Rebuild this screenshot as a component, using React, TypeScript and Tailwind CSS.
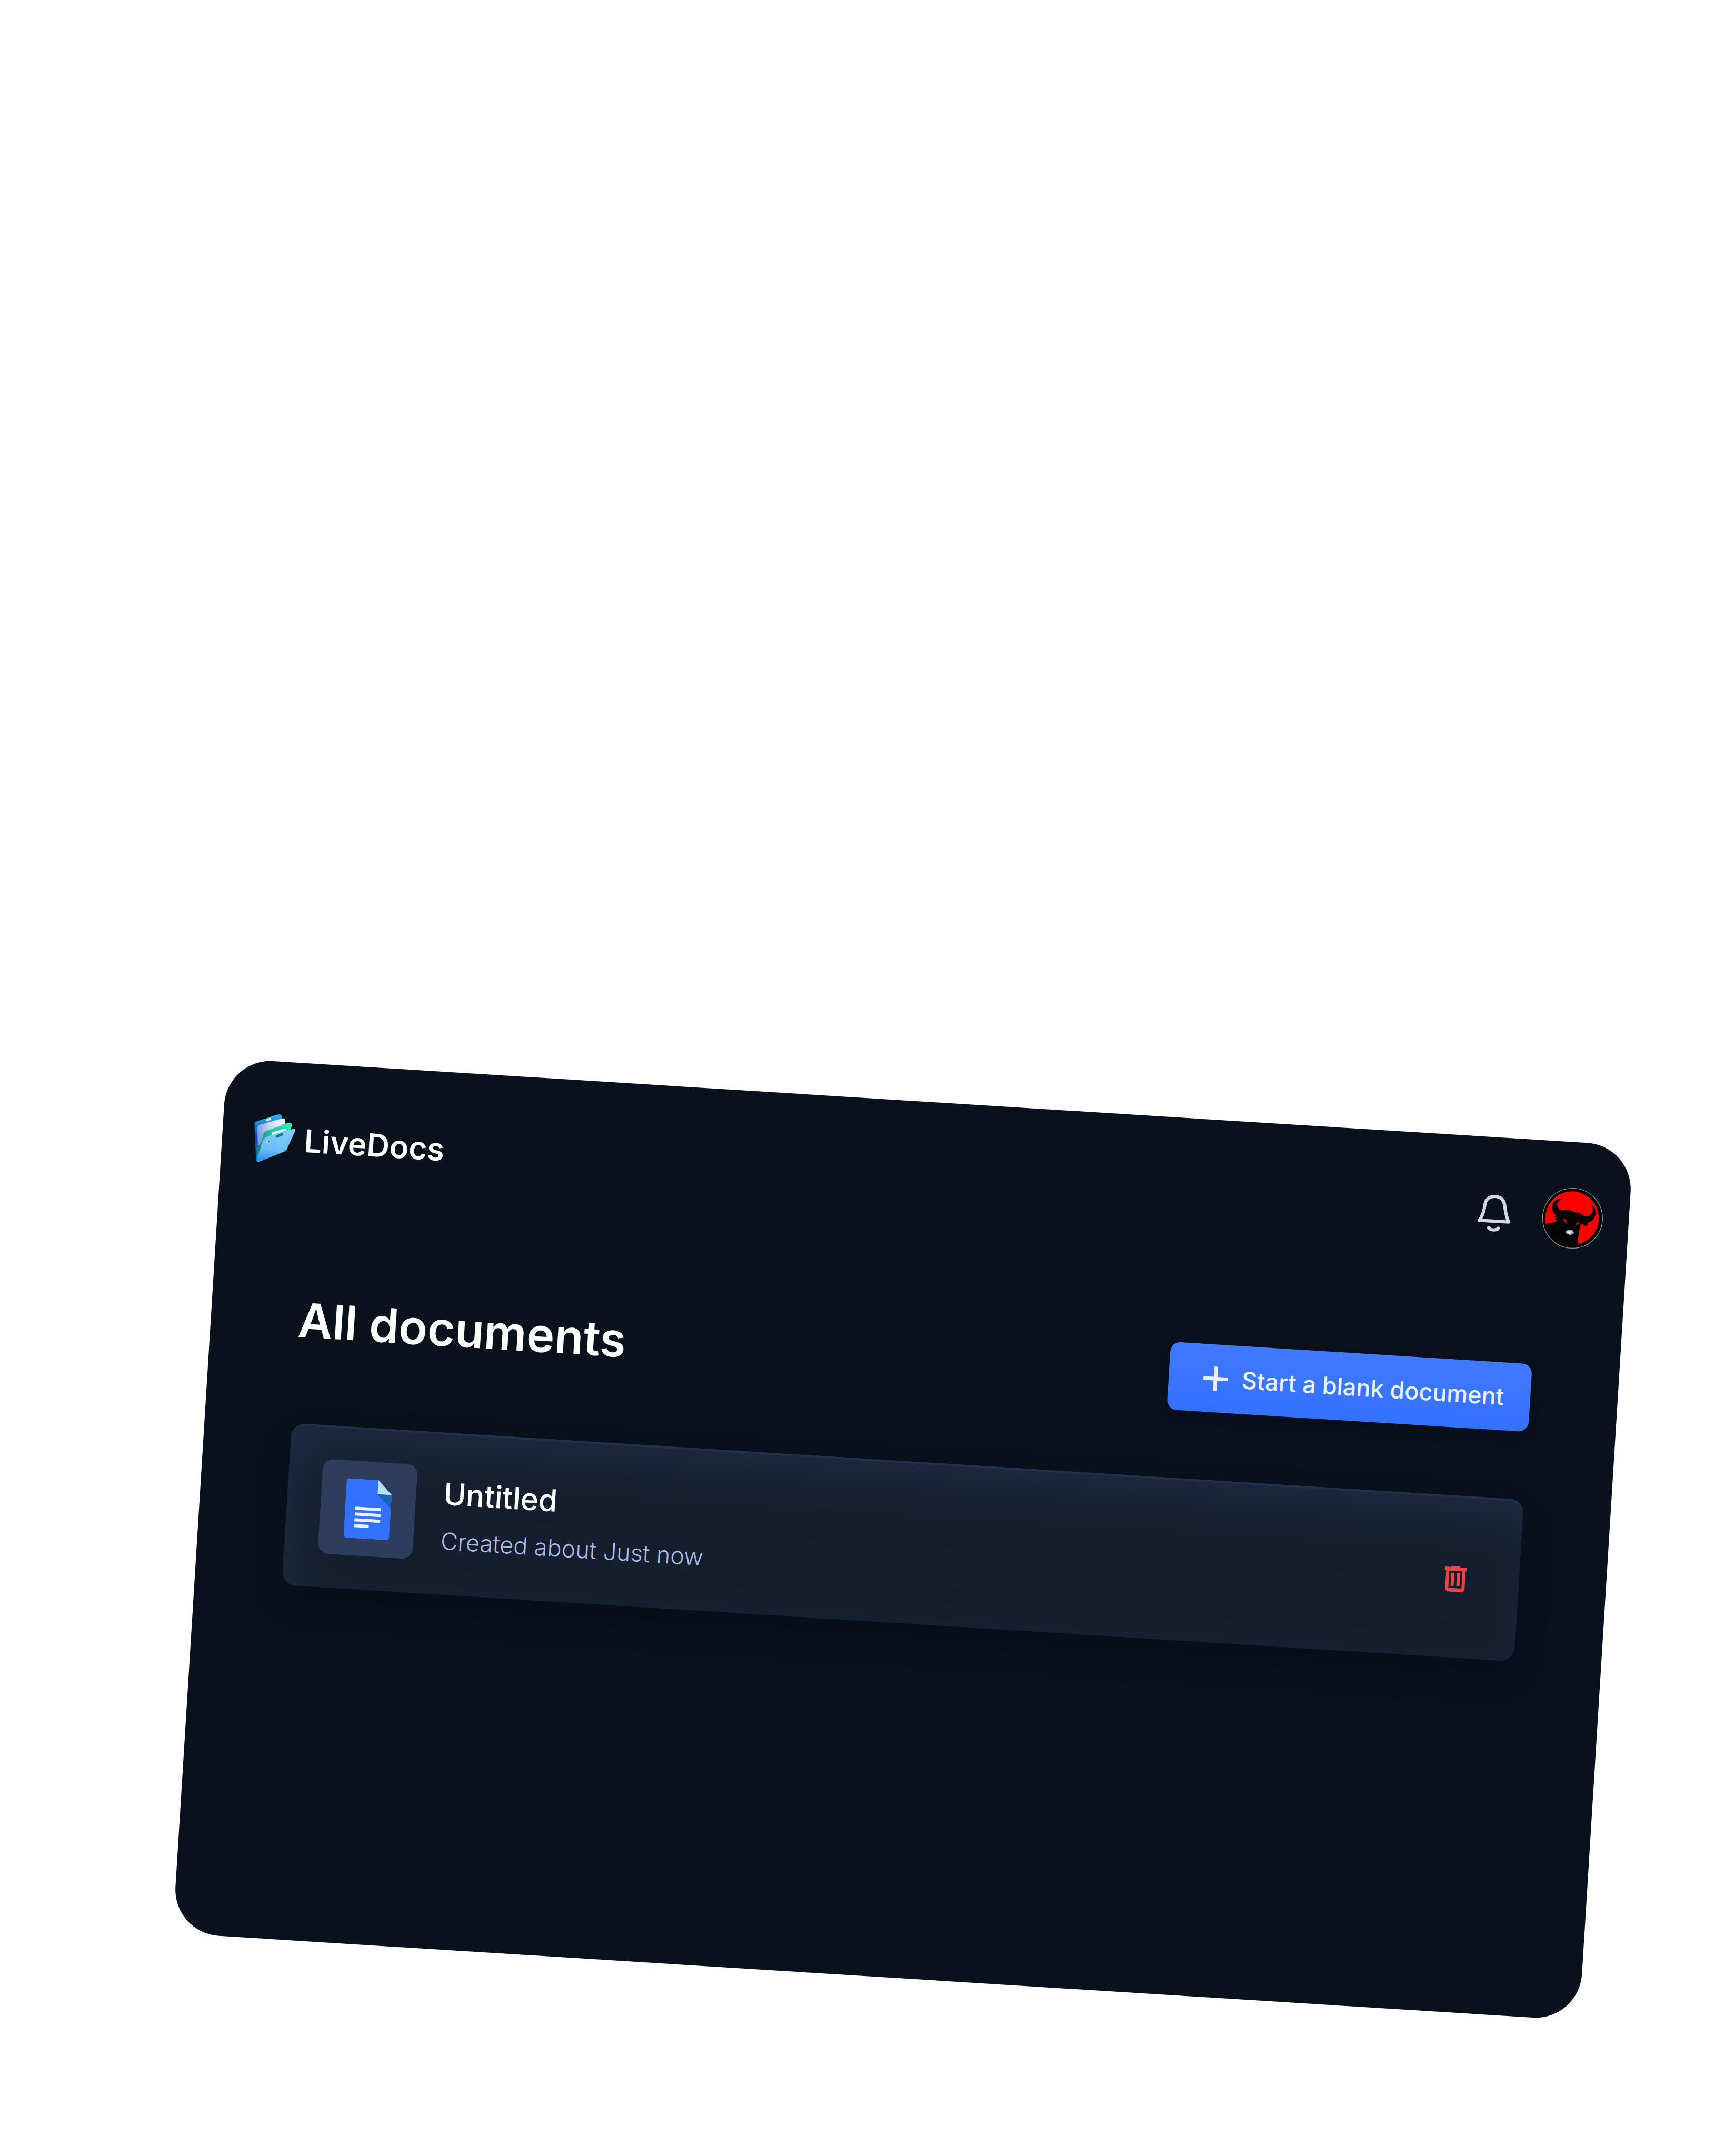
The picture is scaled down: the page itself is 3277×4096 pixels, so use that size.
function FolderLogo() {
  return (
    <svg viewBox="0 0 330 360" className="h-[117px] w-[107px] shrink-0 overflow-visible" aria-hidden="true">
      <defs>
        <linearGradient id="back" x1="0" y1="0" x2="0" y2="1">
          <stop offset="0" stopColor="#38b6ea" />
          <stop offset="0.2" stopColor="#1f86d4" />
          <stop offset="0.5" stopColor="#0f45b4" />
          <stop offset="1" stopColor="#1768c8" />
        </linearGradient>
        <linearGradient id="paper" x1="0" y1="0.4" x2="1" y2="0">
          <stop offset="0" stopColor="#7c9fdb" />
          <stop offset="0.45" stopColor="#cdd9f2" />
          <stop offset="1" stopColor="#f7faff" />
        </linearGradient>
        <linearGradient id="green" x1="0" y1="0.6" x2="1" y2="0">
          <stop offset="0" stopColor="#128378" />
          <stop offset="0.5" stopColor="#22c69f" />
          <stop offset="1" stopColor="#2ef5b8" />
        </linearGradient>
        <linearGradient id="front" x1="0.55" y1="0.1" x2="0.35" y2="1">
          <stop offset="0" stopColor="#7fcbf9" />
          <stop offset="0.6" stopColor="#69bcf7" />
          <stop offset="1" stopColor="#3494ea" />
        </linearGradient>
      </defs>
      <g transform="rotate(-3.56 165 180)">
        <path d="M38 106Q38 92 52 87L172 49Q192 44 198 58L200 80L90 240L54 324Q46 322 46 300Z" fill="url(#back)" />
        <path d="M106 77L130 67Q138 69 134 78L112 88Q102 88 106 77Z" fill="#d9effc" />
        <path d="M55 128Q55 112 70 108L204 70Q217 70 217 84L216 130L90 236L58 250Z" fill="url(#paper)" />
        <path d="M90 165Q92 148 108 144L196 112Q206 100 220 101L250 97Q260 100 257 112L250 135L110 215L54 322L50 240Q74 225 84 190Z" fill="url(#green)" />
        <path d="M140 152L222 129L228 140L142 170Z" fill="#d8f3ee" />
        <path d="M84 210Q90 186 110 180L140 164Q148 168 160 162L268 132Q280 132 277 142L232 242Q226 258 210 267L62 326Q48 328 52 308Z" fill="url(#front)" />
        <path d="M164 174Q168 166 180 164L202 157Q210 160 204 168Q198 178 184 178L170 184Q162 184 164 174Z" fill="#1a7487" />
        <path d="M104 208Q106 198 124 196L134 202Q134 214 120 218L108 220Z" fill="#a8c3ee" />
        <path d="M118 205L128 202L122 213Z" fill="#3762b4" />
      </g>
    </svg>
  );
}

function BellIcon() {
  return (
    <svg viewBox="120 165 205 230" className="h-[74px] w-[66px] overflow-visible" fill="none" stroke="#d3d8e6" strokeWidth="19" strokeLinecap="round" strokeLinejoin="round" aria-hidden="true">
      <g transform="rotate(-3.56 222.5 280)">
        <path d="M134 323C150 302 163 268 167 232C171 202 192 182 225 182C258 182 280 202 284 233C288 272 295 308 308 333Z" />
        <path d="M189 366Q198 379 218 380Q239 380 246 370" />
      </g>
    </svg>
  );
}

function BullAvatar() {
  return (
    <svg viewBox="0 0 402 402" className="h-[130px] w-[130px] overflow-visible" aria-hidden="true">
      <defs>
        <clipPath id="disc">
          <circle cx="198" cy="202" r="157" />
        </clipPath>
      </defs>
      <g transform="rotate(-3.56 201 201)">
        <circle cx="201" cy="203" r="176" fill="#050505" stroke="#8b9290" strokeWidth="4" />
        <circle cx="198" cy="202" r="157" fill="#ff0000" />
        <g clipPath="url(#disc)">
          <path
            d="M158 88C128 82 96 92 84 118C76 146 84 172 108 184L91 192L107 202L93 211L116 218C92 228 68 232 36 238L30 402L224 402L230 356C232 320 238 280 247 240L262 238L270 248L292 244L286 233L294 228C316 222 332 202 336 178C338 152 328 128 308 122C322 136 324 160 312 176C302 190 286 193 268 190C254 176 232 166 206 166C186 152 166 150 146 156C126 156 110 142 110 122C112 102 132 90 158 88Z"
            fill="#050404"
          />
        </g>
        <path d="M148 206Q152 226 172 232Q160 222 155 208Z" fill="#f02020" stroke="#c01818" strokeWidth="3" />
        <path d="M218 240Q236 240 242 224Q232 230 218 240Z" fill="#f02020" stroke="#c01818" strokeWidth="3" />
        <path d="M160 284Q164 272 178 272L198 273Q208 278 209 292Q198 302 184 300Q164 298 160 284Z" fill="#a9a9a9" />
        <path d="M170 284Q178 276 194 279Q200 286 186 294Q176 294 170 284Z" fill="#f1f1f1" />
      </g>
    </svg>
  );
}

function DocIcon() {
  return (
    <svg viewBox="0 0 87 113" className="h-[113px] w-[87px]" aria-hidden="true">
      <path d="M7 0H60L87 27V106Q87 113 80 113H7Q0 113 0 106V7Q0 0 7 0Z" fill="#3371ff" />
      <path d="M60 0L87 27H60Z" fill="#bbdefb" />
      <path d="M60 27H87V54Z" fill="#1565c0" />
      <g fill="#e3f2fd">
        <rect x="19" y="53" width="49" height="6" />
        <rect x="19" y="64" width="49" height="6" />
        <rect x="19" y="75" width="49" height="6" />
        <rect x="19" y="86" width="28" height="6" />
      </g>
    </svg>
  );
}

function TrashIcon() {
  return (
    <svg viewBox="0 0 42 62" className="h-[62px] w-[42px]" aria-hidden="true">
      <g fill="#ef4444">
        <path d="M13 11H29V13H42V20H0V13H13Z" />
        <path fillRule="evenodd" d="M3 18H40V56L36 60H7L3 56ZM9 20V53H34V20Z" />
        <rect x="13" y="24" width="6" height="25" />
        <rect x="24" y="24" width="6" height="25" />
      </g>
    </svg>
  );
}

function Header() {
  return (
    <header className="flex h-[287px] items-center justify-between pr-[42px] pl-[49px]">
      <a href="#" className="flex items-end text-[60px] leading-[109px] font-semibold text-white">
        <FolderLogo />
        <span>LiveDocs</span>
      </a>
      <div className="flex items-center gap-[51px]">
        <button type="button" aria-label="Notifications">
          <BellIcon />
        </button>
        <button type="button" aria-label="Account">
          <BullAvatar />
        </button>
      </div>
    </header>
  );
}

function DocumentRow({ title, created }: { title: string; created: string }) {
  return (
    <li className="flex items-center justify-between rounded-[26px] bg-[#151e2e] p-[64px] shadow-[0_26px_60px_rgba(0,0,0,0.22),inset_0_4px_1px_#22304c,inset_22px_44px_110px_-16px_#202d47]">
      <a href="#" className="flex flex-1 items-center gap-[52px]">
        <span className="flex h-[180px] w-[180px] items-center justify-center rounded-[20px] bg-[#2e3d5b]">
          <DocIcon />
        </span>
        <span className="flex flex-col gap-[13px]">
          <span className="text-[58px] leading-[90px] font-medium text-white">{title}</span>
          <span className="text-[45px] leading-[64px] font-light text-[#a9b9e2]">{created}</span>
        </span>
      </a>
      <button type="button" aria-label="Delete document" className="flex w-[114px] justify-center">
        <TrashIcon />
      </button>
    </li>
  );
}

export default function App() {
  return (
    <div className="flex min-h-screen flex-col justify-end overflow-hidden bg-white pr-[223px] pb-[339px] pl-[377px] font-['Inter',sans-serif]">
      <div className="min-h-[1665px] rotate-[3.56deg] rounded-[88px] bg-[#09111d]">
        <Header />
        <main className="px-[166px] pt-[134px]">
          <div className="flex items-end justify-between">
            <h1 className="text-[90px] leading-[134px] font-semibold text-white">All documents</h1>
            <button
              type="button"
              className="flex h-[129px] items-center gap-[13px] rounded-[19px] bg-linear-to-b from-[#417aff] to-[#3371ff] px-[50px] text-[45px] font-medium text-white/90 shadow-[0_12px_20px_rgba(0,0,0,0.15)]"
            >
              <svg viewBox="0 0 76 76" className="h-[76px] w-[76px]" fill="none" stroke="#e9ecf3" strokeWidth="7" aria-hidden="true">
                <path d="M39 15V61M16 38H62" />
              </svg>
              <span>Start a blank document</span>
            </button>
          </div>
          <ul className="mt-[129px]">
            <DocumentRow title="Untitled" created="Created about Just now" />
          </ul>
        </main>
      </div>
    </div>
  );
}
